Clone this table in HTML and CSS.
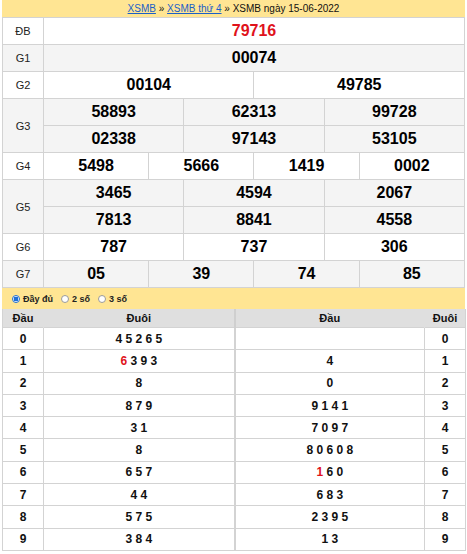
FILE: index.html
```html
<!DOCTYPE html>
<html lang="vi">
<head>
<meta charset="utf-8">
<title>XSMB ngày 15-06-2022</title>
<link rel="stylesheet" href="styles.css">
</head>
<body>
<div class="box">
  <div class="title"><a href="#">XSMB</a> » <a href="#">XSMB thứ 4</a> » XSMB ngày 15-06-2022</div>
  <table class="kq">
    <colgroup>
      <col class="c-lbl">
      <col><col><col><col><col><col><col><col><col><col><col><col>
    </colgroup>
    <tr>
      <td class="lbl">ĐB</td>
      <td colspan="12" class="num red">79716</td>
    </tr>
    <tr class="alt">
      <td class="lbl">G1</td>
      <td colspan="12" class="num">00074</td>
    </tr>
    <tr>
      <td class="lbl">G2</td>
      <td colspan="6" class="num">00104</td>
      <td colspan="6" class="num">49785</td>
    </tr>
    <tr class="alt">
      <td class="lbl" rowspan="2">G3</td>
      <td colspan="4" class="num">58893</td>
      <td colspan="4" class="num">62313</td>
      <td colspan="4" class="num">99728</td>
    </tr>
    <tr class="alt">
      <td colspan="4" class="num">02338</td>
      <td colspan="4" class="num">97143</td>
      <td colspan="4" class="num">53105</td>
    </tr>
    <tr>
      <td class="lbl">G4</td>
      <td colspan="3" class="num">5498</td>
      <td colspan="3" class="num">5666</td>
      <td colspan="3" class="num">1419</td>
      <td colspan="3" class="num">0002</td>
    </tr>
    <tr class="alt">
      <td class="lbl" rowspan="2">G5</td>
      <td colspan="4" class="num">3465</td>
      <td colspan="4" class="num">4594</td>
      <td colspan="4" class="num">2067</td>
    </tr>
    <tr class="alt">
      <td colspan="4" class="num">7813</td>
      <td colspan="4" class="num">8841</td>
      <td colspan="4" class="num">4558</td>
    </tr>
    <tr>
      <td class="lbl">G6</td>
      <td colspan="4" class="num">787</td>
      <td colspan="4" class="num">737</td>
      <td colspan="4" class="num">306</td>
    </tr>
    <tr class="alt">
      <td class="lbl">G7</td>
      <td colspan="3" class="num">05</td>
      <td colspan="3" class="num">39</td>
      <td colspan="3" class="num">74</td>
      <td colspan="3" class="num">85</td>
    </tr>
  </table>
  <div class="opts">
    <label class="opt"><span class="radio on"></span>Đầy đủ</label>
    <label class="opt"><span class="radio"></span>2 số</label>
    <label class="opt"><span class="radio"></span>3 số</label>
  </div>
  <table class="loto">
    <colgroup>
      <col class="l1"><col class="l2"><col class="l3"><col class="l4">
    </colgroup>
    <tr class="head">
      <th>Đầu</th><th class="mid">Đuôi</th><th>Đầu</th><th>Đuôi</th>
    </tr>
    <tr><td>0</td><td class="mid">4 5 2 6 5</td><td></td><td>0</td></tr>
    <tr><td>1</td><td class="mid"><span class="red">6</span> 3 9 3</td><td>4</td><td>1</td></tr>
    <tr><td>2</td><td class="mid">8</td><td>0</td><td>2</td></tr>
    <tr><td>3</td><td class="mid">8 7 9</td><td>9 1 4 1</td><td>3</td></tr>
    <tr><td>4</td><td class="mid">3 1</td><td>7 0 9 7</td><td>4</td></tr>
    <tr><td>5</td><td class="mid">8</td><td>8 0 6 0 8</td><td>5</td></tr>
    <tr><td>6</td><td class="mid">6 5 7</td><td><span class="red">1</span> 6 0</td><td>6</td></tr>
    <tr><td>7</td><td class="mid">4 4</td><td>6 8 3</td><td>7</td></tr>
    <tr><td>8</td><td class="mid">5 7 5</td><td>2 3 9 5</td><td>8</td></tr>
    <tr><td>9</td><td class="mid">3 8 4</td><td>1 3</td><td>9</td></tr>
  </table>
</div>
</body>
</html>
```
FILE: styles.css
```css
html, body {
  margin: 0;
  padding: 0;
  background: #fff;
}
body {
  font-family: "Liberation Sans", Arial, sans-serif;
  color: #000;
}
.box {
  width: 463px;
  margin-left: 2px;
}
.title {
  height: 17px;
  line-height: 17px;
  background: #ffe593;
  text-align: center;
  font-size: 10px;
  color: #111;
}
.title a {
  color: #1a5fc8;
  text-decoration: underline;
}
.kq, .loto {
  width: 463px;
  border-collapse: collapse;
  table-layout: fixed;
}
.kq td {
  border: 1px solid #d3d3d3;
  padding: 0;
  height: 26px;
  text-align: center;
  vertical-align: middle;
  background: #fff;
}
.kq tr.alt td {
  background: #f4f4f4;
}
.c-lbl {
  width: 41px;
}
.kq .lbl {
  font-size: 11px;
  color: #222;
}
.kq .num {
  font-size: 16px;
  font-weight: bold;
  color: #000;
}
.kq .num.red {
  color: #e0121b;
}
.opts {
  height: 21px;
  background: #ffe593;
  display: flex;
  align-items: center;
  gap: 8px;
  padding-left: 10px;
  font-size: 9px;
  font-weight: bold;
  color: #222;
}
.opt {
  display: flex;
  align-items: center;
  gap: 3px;
}
.radio {
  width: 6px;
  height: 6px;
  border-radius: 50%;
  border: 1px solid #9a9a9a;
  background: #fff;
  box-sizing: content-box;
}
.radio.on {
  border-color: #1f6fd6;
  background: radial-gradient(circle, #1f6fd6 0 2.2px, #fff 2.6px);
}
.l1 { width: 41px; }
.l2 { width: 191px; }
.l3 { width: 190px; }
.l4 { width: 41px; }
.loto th {
  background: #dfdfdf;
  height: 18px;
  padding: 0;
  font-size: 11px;
  font-weight: bold;
  color: #111;
  text-align: center;
  border: 0;
  border-left: 1px solid #dfdfdf;
}
.loto th:first-child {
  border-left: 1px solid #d3d3d3;
}
.loto th:last-child {
  border-right: 1px solid #d3d3d3;
}
.loto td {
  border: 1px solid #d3d3d3;
  padding: 0;
  height: 21.3px;
  text-align: center;
  vertical-align: middle;
  font-size: 12px;
  font-weight: bold;
  color: #111;
}
.loto .mid {
  border-right: 2px solid #d3d3d3;
}
.loto th.mid {
  border-right: 2px solid #cfcfcf;
}
.loto .red {
  color: #e0121b;
}
```
